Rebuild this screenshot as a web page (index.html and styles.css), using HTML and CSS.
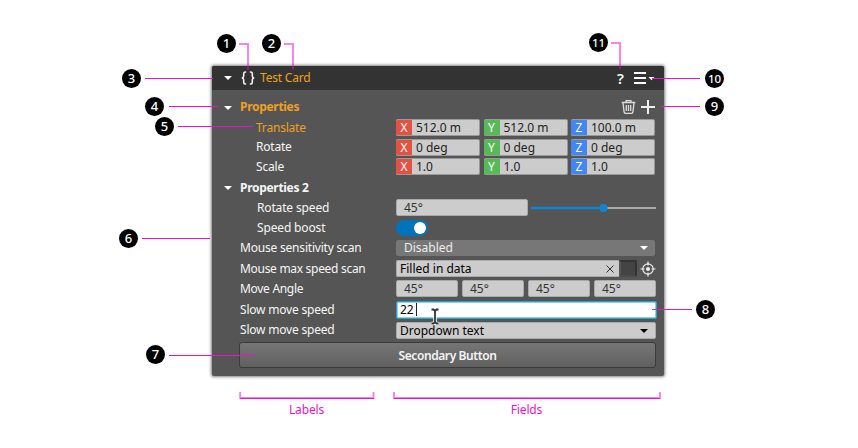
FILE: index.html
```html
<!DOCTYPE html>
<html lang="en">
<head>
<meta charset="utf-8">
<title>Test Card</title>
<link rel="stylesheet" href="styles.css">
</head>
<body>
<main class="card">
  <header class="header">
    <svg class="caret" viewBox="0 0 8 4"><path d="M0 0h8L4 4z"/></svg>
    <svg class="braces" viewBox="0 0 14 14"><path d="M5.2 1H4.4Q2.7 1 2.7 2.7V5Q2.7 6.8.8 7Q2.7 7.2 2.7 9V11.3Q2.7 13 4.4 13H5.2M8.8 1H9.6Q11.3 1 11.3 2.7V5Q11.3 6.8 13.2 7Q11.3 7.2 11.3 9V11.3Q11.3 13 9.6 13H8.8"/></svg>
    <span class="title">Test Card</span>
    <span class="help">?</span>
    <svg class="menu" viewBox="0 0 21 13"><path d="M0 0h12v2H0zM0 5h12v2H0zM0 10h12v2H0zM14.5 5h6l-3 3.2z"/></svg>
  </header>
  <section class="body">
    <div class="row tall group accent">
      <svg class="caret" viewBox="0 0 8 4"><path d="M0 0h8L4 4z"/></svg>
      <span class="heading">Properties</span>
      <svg class="trash" viewBox="0 0 14 14"><path d="M.2 2.5h13.600M4.600 2.200V.6h4.800v1.600M1.500 3l1.100 8.800q.2 1.600 1.600 1.600h5.600q1.400 0 1.600-1.600L12.500 3M4.800 5v6M7 5v6M9.200 5v6"/></svg>
      <svg class="plus" viewBox="0 0 14 14"><path d="M7 0v14M0 7h14"/></svg>
    </div>
    <div class="row accent">
      <span class="label nested">Translate</span>
      <div class="vector raised"><div class="axis"><b class="x">X</b><span>512.0 m</span></div><div class="axis"><b class="y">Y</b><span>512.0 m</span></div><div class="axis"><b class="z">Z</b><span>100.0 m</span></div></div>
    </div>
    <div class="row short">
      <span class="label nested raised">Rotate</span>
      <div class="vector"><div class="axis"><b class="x">X</b><span>0 deg</span></div><div class="axis"><b class="y">Y</b><span>0 deg</span></div><div class="axis"><b class="z">Z</b><span>0 deg</span></div></div>
    </div>
    <div class="row">
      <span class="label nested raised">Scale</span>
      <div class="vector raised"><div class="axis"><b class="x">X</b><span>1.0</span></div><div class="axis"><b class="y">Y</b><span>1.0</span></div><div class="axis"><b class="z">Z</b><span>1.0</span></div></div>
    </div>
    <div class="row tall group">
      <svg class="caret" viewBox="0 0 8 4"><path d="M0 0h8L4 4z"/></svg>
      <span class="heading">Properties 2</span>
    </div>
    <div class="row">
      <span class="label nested wide">Rotate speed</span>
      <div class="field speed raised">45°</div>
      <svg class="slider" viewBox="0 0 126 10"><path class="track" d="M1 5h124"/><path class="filled" d="M0 5h72"/><circle cx="72.5" cy="5" r="4"/></svg>
    </div>
    <div class="row">
      <span class="label nested wide">Speed boost</span>
      <div class="toggle"></div>
    </div>
    <div class="row">
      <span class="label">Mouse sensitivity scan</span>
      <div class="field disabled"><span>Disabled</span><svg class="caret" viewBox="0 0 8 4"><path d="M0 0h8L4 4z"/></svg></div>
    </div>
    <div class="row tall">
      <span class="label snug">Mouse max speed scan</span>
      <div class="field file"><span>Filled in data</span><svg class="clear" viewBox="0 0 8 8"><path d="M.5.5l7 7M7.5.5l-7 7"/></svg></div>
      <div class="swatch"></div>
      <svg class="target" viewBox="0 0 16 16"><circle cx="8" cy="8" r="5.2"/><circle class="dot" cx="8" cy="8" r="2"/><path d="M8 .5v4M8 11.5v4M.5 8h4M11.5 8h4"/></svg>
    </div>
    <div class="row">
      <span class="label snug">Move Angle</span>
      <div class="angles raised"><div class="field">45°</div><div class="field">45°</div><div class="field">45°</div><div class="field">45°</div></div>
    </div>
    <div class="row tall">
      <span class="label">Slow move speed</span>
      <div class="field active">22<i class="text-caret"></i></div>
    </div>
    <div class="row tall">
      <span class="label raised">Slow move speed</span>
      <div class="field dropdown"><span>Dropdown text</span><svg class="caret" viewBox="0 0 8 4"><path d="M0 0h8L4 4z"/></svg></div>
    </div>
    <div class="button">Secondary Button</div>
  </section>
</main>
<svg class="callouts" viewBox="0 0 858 448">
  <g class="soft">
    <path d="M239 44h9v26M284 44h9v26M611 43h9v26"/>
    <path d="M240.200 392v6h133.300v-6M394 392v6h266v-6"/>
  </g>
  <g class="sharp">
    <path d="M145 78.500h68M169 106.500h49M178 126.500h75M142 238.500h68M169 355.500h86M652 309.500h40M661 106.500h39M652 78.500h48"/>
    <path d="M240 398.500h134M394 398.500h266"/>
  </g>
  <g class="badges">
    <circle cx="226.500" cy="43.500" r="9.500"/><circle cx="271.500" cy="43.500" r="9.500"/><circle cx="131.500" cy="78.500" r="9.500"/><circle cx="154.500" cy="106.500" r="9.500"/><circle cx="164.500" cy="126.500" r="9.500"/><circle cx="128.500" cy="238.500" r="9.500"/><circle cx="155.500" cy="354.500" r="9.500"/><circle cx="705.500" cy="309.500" r="9.500"/><circle cx="714.500" cy="106.500" r="9.500"/><circle cx="714.500" cy="78.500" r="9.500"/><circle cx="598.500" cy="42.500" r="9.500"/>
  </g>
  <g class="numbers">
    <text x="226.500" y="48">1</text><text x="271.500" y="48">2</text><text x="131.500" y="83">3</text><text x="154.500" y="111">4</text><text x="164.500" y="131">5</text><text x="128.500" y="243">6</text><text x="155.500" y="359">7</text><text x="705.500" y="314">8</text><text x="714.500" y="111">9</text><text class="small" x="714.500" y="82.500">10</text><text class="small" x="598.500" y="46.500">11</text>
  </g>
  <g class="captions"><text x="306.500" y="414">Labels</text><text x="526.500" y="414">Fields</text></g>
  <g class="cursor"><path class="halo" d="M431.500 309.500h2l1.500 1.500 1.500-1.500h2M435 311v11M431.500 323.500h2l1.500-1.500 1.500 1.500h2"/><path d="M431.500 309.500h2l1.500 1.500 1.500-1.500h2M435 311v11M431.500 323.500h2l1.500-1.500 1.500 1.500h2"/></g>
</svg>
</body>
</html>
```
FILE: styles.css
```css
* { box-sizing: border-box; }
body {
  margin: 0;
  width: 858px;
  height: 448px;
  padding: 66px 0 0 212px;
  background: #fff;
  font: 12px/16px "Noto Sans", sans-serif;
  color: #f5f5f5;
  overflow: hidden;
}
svg { display: block; flex: none; }
.card {
  width: 452px;
  height: 310px;
  border-radius: 2px;
  background: #555;
  box-shadow: 0 0 3px 1px rgba(0, 0, 0, .5);
}
.header {
  display: flex;
  align-items: center;
  height: 24px;
  padding: 0 9px 0 12px;
  border-radius: 2px 2px 0 0;
  background: #333;
}
.caret { width: 8px; height: 4px; fill: #fff; }
.braces { width: 14px; height: 14px; margin-left: 9px; fill: none; stroke: #eee; stroke-width: 1.6; }
.title { margin-left: 5px; color: #f0a01e; letter-spacing: -.2px; }
.help { margin-left: auto; font-size: 15px; font-weight: 600; }
.menu { width: 21px; height: 13px; margin-left: 10px; fill: #fff; }
.body { padding-top: 7px; }
.row { display: flex; align-items: center; height: 20px; padding-left: 28px; }
.row.tall { height: 21px; }
.row.short { height: 19px; }
.row.group { padding: 0 9px 0 12px; }
.row .raised { margin-top: -1px; }
.label { flex: none; width: 156px; letter-spacing: -.2px; white-space: nowrap; }
.label.wide { letter-spacing: -.15px; }
.label.snug { letter-spacing: -.3px; }
.nested { padding-left: 16px; }
.nested.wide { padding-left: 17px; }
.accent .label, .accent .heading { color: #f0a01e; }
.accent .heading { margin-top: -1px; }
.heading { margin: 0 auto 0 8px; font-weight: 700; letter-spacing: -.3px; }
.accent .trash, .accent .plus { margin-top: -2px; }
.trash { width: 15px; height: 14px; fill: none; stroke: #ddd; stroke-width: 1.3; }
.plus { width: 14px; height: 14px; margin-left: 5px; stroke: #eee; stroke-width: 2; }
.vector { display: flex; gap: 3.5px; }
.axis {
  display: flex;
  width: 84px;
  height: 17px;
  overflow: hidden;
  border: 1px solid #999;
  border-left-width: 0;
  border-radius: 2px;
  background: #ccc;
  color: #222;
  line-height: 16px;
}
.axis b { width: 16px; font-weight: 400; text-align: center; color: #fff; }
.axis span { margin-left: 4px; }
.x { background: #e25243; }
.y { background: #58b957; }
.z { background: #4285f4; }
.field {
  height: 17px;
  padding-left: 7px;
  border: 1px solid #aaa;
  border-radius: 2px;
  background: #ccc;
  color: #333;
  line-height: 16px;
  white-space: nowrap;
}
.speed { width: 132px; }
.slider { width: 126px; height: 10px; margin-left: 3px; fill: #0d86d8; stroke-width: 2; }
.track { stroke: #aaa; }
.filled { stroke: #0d86d8; stroke-width: 2.5; }
.toggle {
  display: flex;
  align-items: center;
  justify-content: flex-end;
  width: 32px;
  height: 16px;
  padding-right: 2px;
  border-radius: 8px;
  background: #0073bb;
}
.toggle::after { content: ""; width: 12px; height: 12px; border-radius: 50%; background: #fff; }
.disabled, .file, .dropdown { display: flex; align-items: center; justify-content: space-between; }
.disabled { width: 259px; height: 16px; padding-right: 6px; border-color: #777; background: #777; color: #eee; }
.file { width: 223px; padding: 0 5px 0 3px; border-right: 0; border-radius: 2px 0 0 2px; color: #000; }
.clear { width: 8px; height: 8px; stroke: #333; }
.swatch { width: 18px; height: 17px; border: 2px solid #333; border-left-color: #555; border-bottom-color: #4a4a4a; border-radius: 0 2px 2px 0; background: #444; }
.target { width: 16px; height: 16px; margin-left: 2.5px; fill: none; stroke: #eee; stroke-width: 1.2; }
.target .dot { fill: #eee; stroke: none; }
.angles { display: flex; gap: 4px; }
.angles .field { width: 62px; }
.active { display: flex; width: 261px; height: 18px; padding-left: 3px; border: 1px solid #1aa6cf; box-shadow: inset 0 0 0 .5px #1aa6cf; background: #fff; color: #000; }
.text-caret { width: 1px; height: 13px; margin: 1px 0 0 2px; background: #222; }
.dropdown { width: 260px; padding: 0 7px 0 3px; color: #000; }
.dropdown .caret { fill: #000; }
.button {
  width: 417px;
  height: 26px;
  margin: 1px 0 0 27px;
  border: 1px solid #3b3b3b;
  border-radius: 3px;
  background: linear-gradient(#767676, #606060);
  font-weight: 600;
  letter-spacing: -.4px;
  line-height: 25px;
  text-align: center;
}
.callouts { position: absolute; left: 0; top: 0; width: 858px; height: 448px; fill: none; }
.soft { stroke: #ee00cc; stroke-opacity: .48; stroke-width: 2; }
.sharp { stroke: #e815c4; }
.badges { fill: #000; }
.numbers { fill: #fff; font-size: 13px; font-weight: 500; text-anchor: middle; }
.numbers .small { font-size: 11.5px; }
.captions { fill: #e815c4; text-anchor: middle; letter-spacing: -.15px; }
.cursor { stroke: #333; stroke-width: 1.8; }
.cursor .halo { stroke: #fff; stroke-width: 3.5; }
```
